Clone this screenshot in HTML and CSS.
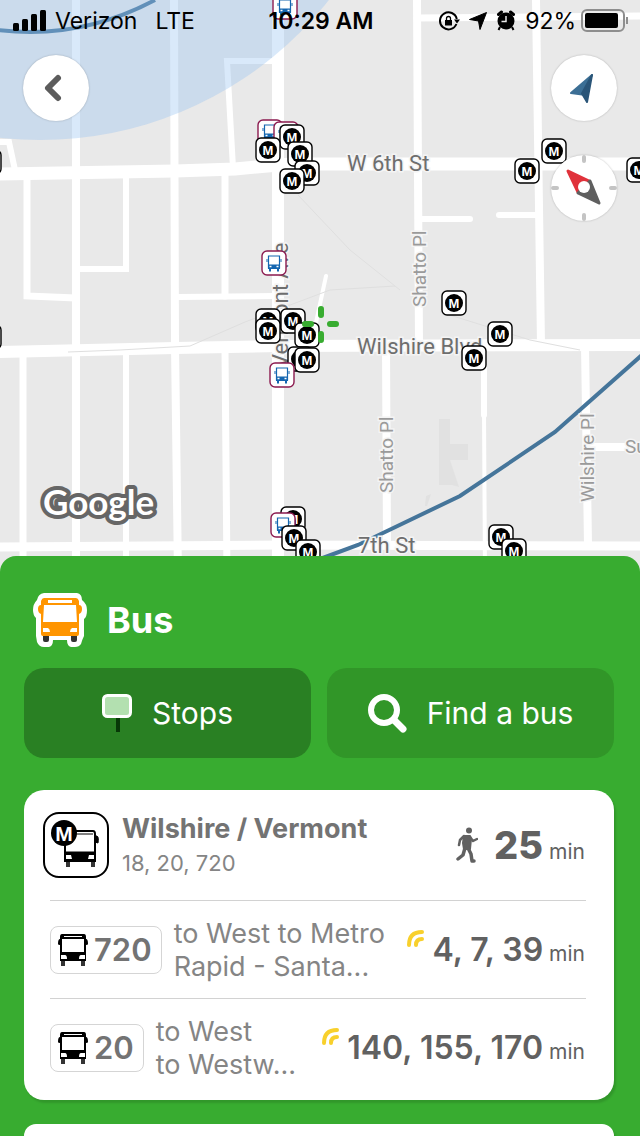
FILE: index.html
```html
<!DOCTYPE html>
<html lang="en">

<head>
  <meta charset="UTF-8">
  <title>Bus</title>
  <meta name="viewport" content="width=device-width,initial-scale=1">
  <link rel="stylesheet" href="styles.css">
</head>

<body>
  <section class="map">
    <svg class="map-canvas" viewBox="0 0 640 576" preserveAspectRatio="xMidYMin slice">
      <defs>
        <g id="metro">
          <rect x="-12" y="-12" width="24" height="24" rx="5" fill="#fff" stroke="#000" stroke-width="1.4" />
          <circle r="9" />
          <text class="pin-m" y="5" text-anchor="middle">M</text>
        </g>
        <g id="bus-pin">
          <rect x="-12" y="-12" width="24" height="24" rx="5" fill="#fff" stroke="#8b1a4f" stroke-width="1.4" />
          <path d="M-5.500-7H5.500V5H-5.500z" fill="#fff" stroke="#1466b0" stroke-width="1.2" />
          <path d="M-6 1.500H6V6H-6zM-5 6h2v2.500H-5zM3 6H5v2.500H3zM-7.500-4h1v3H-7.500zM6.500-4H7.500v3H6.500z" fill="#1466b0" />
          <path d="M-4.500 3.500h2M2.500 3.500h2" stroke="#fff" stroke-width="1.500" />
        </g>
      </defs>

      <rect width="640" height="576" fill="#e9e9e9" />

      <!-- buildings -->
      <path d="M439 419h11v25h18v16h-18l9 27-7-2-13 0zM426 496l5-2-4 12h-2z" fill="#e1e1e1" />

      <!-- roads -->
      <g class="roads">
        <path stroke-width="13" d="M0 174L175 171 235 169 290 164H640" />
        <path stroke-width="12" d="M0 352L175 348 280 346 640 345" />
        <path stroke-width="9" d="M0 547L280 545 640 546" />
        <path stroke-width="12" d="M278 0V576" />
        <path stroke-width="8" d="M76 0V576M174 0L175 345 178 576M417 0L419 345M536 0L541 345M386 345L387 545M585 345L588 545M590 447H640" />
        <path stroke-width="7" d="M27 174V296L76 298M23 350V576M417 18L640 16M225 170V296M225 350L227 576" />
        <path stroke-width="6" d="M0 142H9L15 170M275 61H227L233 168M126 174V269H76M126 350V576M178 297L275 296M420 219H470M499 215H536M484 350V415" />
        <path stroke-width="4" d="M484 410L485 576M326 276L314 332" />
      </g>
      <path d="M68 352L120 350 190 346 245 322 330 290 395 286M298 195L350 250 400 290M440 312L530 340 580 350" fill="none" stroke="#dfdfdf" />

      <!-- transit line and walk radius -->
      <path class="line" d="M320 559L358 545 460 496 555 432 642 355M-2 30Q80 40 155 0" />
      <circle cx="40" cy="-228" r="368" fill="#95c3f2" fill-opacity=".36" />

      <g class="street">
        <text x="347" y="171">W 6th St</text>
        <text x="357" y="354">Wilshire Blvd</text>
        <text x="358" y="553">7th St</text>
        <text transform="translate(288 368) rotate(-90)">Vermont Ave</text>
      </g>
      <g class="street minor">
        <text transform="translate(426 307) rotate(-90)">Shatto Pl</text>
        <text transform="translate(393 493) rotate(-90)">Shatto Pl</text>
        <text transform="translate(594 502) rotate(-90)">Wilshire Pl</text>
        <text x="625" y="453">Sunset Pl</text>
      </g>

      <use href="#bus-pin" x="285" y="7" />
      <use href="#bus-pin" x="270" y="132" />
      <use href="#bus-pin" x="286" y="134" />
      <use href="#metro" x="292" y="137" />
      <use href="#metro" x="268" y="150" />
      <use href="#metro" x="300" y="154" />
      <use href="#metro" x="307" y="173" />
      <use href="#metro" x="292" y="181" />
      <use href="#metro" x="-11" y="162" />
      <use href="#metro" x="-11" y="337" />
      <use href="#metro" x="554" y="151" />
      <use href="#metro" x="527" y="171" />
      <use href="#metro" x="639" y="170" />
      <use href="#bus-pin" x="274" y="263" />
      <use href="#metro" x="268" y="321" />
      <use href="#metro" x="293" y="321" />
      <use href="#metro" x="268" y="331" />
      <use href="#metro" x="307" y="335" />
      <use href="#metro" x="300" y="359" />
      <use href="#metro" x="307" y="360" />
      <use href="#bus-pin" x="282" y="375" />
      <use href="#metro" x="454" y="303" />
      <use href="#metro" x="500" y="334" />
      <use href="#metro" x="474" y="358" />
      <use href="#metro" x="293" y="519" />
      <use href="#bus-pin" x="283" y="525" />
      <use href="#metro" x="294" y="538" />
      <use href="#metro" x="308" y="552" />
      <use href="#metro" x="501" y="537" />
      <use href="#metro" x="514" y="551" />

      <path d="M321 309v6M321 334v6M305 324h6M330 324h6" stroke="#38ac30" stroke-width="6" stroke-linecap="round" />
      <text class="google" x="43" y="515">Google</text>
    </svg>

    <header class="status">
      <div class="status-side">
        <svg class="bars" viewBox="0 0 33 21">
          <rect y="13" width="6" height="8" rx="1.500" />
          <rect x="9" y="9" width="6" height="12" rx="1.500" />
          <rect x="18" y="4" width="6" height="17" rx="1.500" />
          <rect x="27" width="6" height="21" rx="1.500" />
        </svg>
        <span class="carrier">Verizon</span>
        <span>LTE</span>
      </div>
      <strong>10:29 AM</strong>
      <div class="status-side right">
        <svg class="lock" viewBox="0 0 21 20" fill="none" stroke="#000" stroke-width="2">
          <path d="M17.400 13A8.500 8.500 0 1 1 17.800 8" />
          <path d="M15 8.500h6L18 12.500z" fill="#000" stroke="none" />
          <rect x="6" y="9" width="7" height="5.500" fill="#000" stroke="none" />
          <path d="M7.500 9V7.500a2 2 0 0 1 4 0V9" stroke-width="1.300" />
        </svg>
        <svg class="arrow" viewBox="0 0 18 18">
          <path d="M17.500 .5L11 17.500 9.500 9 .5 7.500z" stroke="#000" stroke-linejoin="round" />
        </svg>
        <svg class="alarm" viewBox="0 0 20 21">
          <circle cx="10" cy="11" r="8.500" />
          <path d="M2.500 4.500l3-2.500M14.500 2l3 2.500" stroke="#000" stroke-width="3" stroke-linecap="round" />
          <path d="M4 17l-1.500 3M16 17l1.500 3" stroke="#000" stroke-width="2" />
          <path d="M10 6v5.500H5.500" fill="none" stroke="#e9e9e9" stroke-width="1.500" />
        </svg>
        <span>92%</span>
        <svg class="battery" viewBox="0 0 48 24">
          <rect x="1" y="1" width="42" height="21" rx="5" fill="none" stroke="#8e8e8e" stroke-width="2" />
          <rect x="4" y="4" width="33" height="15" rx="2" />
          <path d="M46 8v7" stroke="#8e8e8e" stroke-width="2" />
        </svg>
      </div>
    </header>

    <div class="controls">
      <button class="round" aria-label="Back">
        <svg viewBox="0 0 66 66"><path d="M35 23L25 33 35 43" fill="none" stroke="#5c5c5c" stroke-width="6" stroke-linecap="round" stroke-linejoin="round" /></svg>
      </button>
      <div class="controls-right">
        <button class="round" aria-label="My location">
          <svg viewBox="0 0 66 66">
            <path d="M41 20L20 38 31 39.500z" fill="#3c6f95" stroke="#3c6f95" stroke-width="2" stroke-linejoin="round" />
            <path d="M41 20L31 38.500 36 47z" fill="#2a5578" stroke="#2a5578" stroke-width="2" stroke-linejoin="round" />
          </svg>
        </button>
        <button class="round" aria-label="Compass">
          <svg viewBox="0 0 66 66">
            <path d="M33 2v4M33 60v4M2 33h4M60 33h4" stroke="#c4c4c4" stroke-width="4" stroke-linecap="round" />
            <path d="M17 16L38 26 27 37z" fill="#e0323b" stroke="#e0323b" stroke-width="3" stroke-linejoin="round" />
            <path d="M48 48L39 26 27 38z" fill="#5f5f5f" stroke="#5f5f5f" stroke-width="3" stroke-linejoin="round" />
            <circle cx="33" cy="32" r="6" fill="#fff" />
          </svg>
        </button>
      </div>
    </div>
  </section>

  <main class="sheet">
    <div class="title">
      <svg viewBox="0 0 54 54">
        <path d="M11 0H44Q49 1 49 7Q54 11 54 17Q54 24 51 26V43Q49 47 48 51Q46 54 42 54H38Q34 53 34 47H20Q20 53 16 54H11Q6 54 4 49L3 43V25Q0 22 0 17Q0 11 4 7Q5 1 11 0z" fill="#fff" />
        <path d="M10 42h6v5q0 2-2 2h-2q-2 0-2-2zM38 42h6v5q0 2-2 2h-2q-2 0-2-2z" fill="#333" />
        <path d="M11 5H43Q45 5 46 8V12Q49 12 49 16Q49 20 46 21V41Q46 43 44 43H10Q8 43 8 41V21Q5 20 5 16Q5 12 8 12V8Q9 5 11 5z" fill="#ff9500" />
        <path d="M15 7h24v3H15zM11 12h32l1 17H10zM10 35h5q2 1 2 4h-7zM44 35h-5q-2 1-2 4h7z" fill="#fff" />
      </svg>
      <h1>Bus</h1>
    </div>

    <div class="tabs">
      <button class="tab active">
        <svg class="stop-icon" viewBox="0 0 30 38">
          <path d="M16 20v18" stroke="#073807" stroke-width="4" />
          <rect x="1.500" y="1.500" width="27" height="21" rx="4" fill="#b3e0b0" stroke="#fff" stroke-width="3" />
        </svg>
        Stops
      </button>
      <button class="tab">
        <svg class="search-icon" viewBox="0 0 39 39" fill="none" stroke="#fff" stroke-width="6" stroke-linecap="round">
          <circle cx="16" cy="16" r="13" />
          <path d="M26 26L35 35" stroke-width="7" />
        </svg>
        Find a bus
      </button>
    </div>

    <article class="card">
      <div class="stop">
        <svg class="stop-logo" viewBox="0 0 66 66">
          <rect x="1" y="1" width="64" height="64" rx="15" fill="#fff" stroke="#000" stroke-width="2" />
          <path d="M23 49h4v6h-4zM48 49h4v6h-4z" fill="#333" />
          <path d="M22 22V49H52V22Q52 19 50 19H23" fill="#fff" stroke="#000" stroke-width="2" />
          <path d="M25 22h25M22 40h30v9H22zM52 24h2q2 1 1 7l-3-1z" stroke="#000" />
          <path d="M23 43h5l1 4h-6zM51 43h-5l-1 4h6z" fill="#fff" />
          <circle cx="21" cy="21" r="13" />
          <text class="logo-m" x="21" y="29" text-anchor="middle">M</text>
        </svg>
        <div class="stop-name">
          <h2>Wilshire / Vermont</h2>
          <p>18, 20, 720</p>
        </div>
        <div class="walk">
          <svg viewBox="0 0 22 36" fill="#616161" stroke="#616161" stroke-linecap="round" stroke-linejoin="round">
            <circle cx="13" cy="3.500" r="3" stroke="none" />
            <path d="M8 9h6l1 3-1 10H8l-1-6z" stroke-width="2" />
            <path d="M8 9L4 13 3 18M14 10l3 4 4-2" fill="none" stroke-width="2.500" />
            <path d="M9 21L7 28 2 32M12 21l3 6 1 7h2" fill="none" stroke-width="3.500" />
          </svg>
          <b>25</b><span>min</span>
        </div>
      </div>

      <div class="route">
        <div class="line-badge">
          <svg viewBox="0 0 30 32">
            <path d="M3 27h4v5H3zM23 27h4v5h-4z" fill="#333" />
            <path d="M4 0h22q2 0 2 3v2q2 0 2 5 0 1-2 1v16H2V11Q0 11 0 10 0 5 2 5V3q0-3 2-3z" />
            <path d="M6 2h18v1H6zM4 5h22v13H4zM3 21h4q2 0 2 4H3zM27 21h-4q-2 0-2 4h6z" fill="#fff" />
          </svg>
          <b>720</b>
        </div>
        <p>to West to Metro<br>Rapid - Santa...</p>
        <div class="times">
          <svg viewBox="0 0 17 17"><path d="M2 15Q2 2 15 2M9 15Q9 9 15 9" fill="none" stroke="#f8d02c" stroke-width="4" stroke-linecap="round" /></svg>
          <b>4, 7, 39</b><span>min</span>
        </div>
      </div>

      <div class="route">
        <div class="line-badge">
          <svg viewBox="0 0 30 32">
            <path d="M3 27h4v5H3zM23 27h4v5h-4z" fill="#333" />
            <path d="M4 0h22q2 0 2 3v2q2 0 2 5 0 1-2 1v16H2V11Q0 11 0 10 0 5 2 5V3q0-3 2-3z" />
            <path d="M6 2h18v1H6zM4 5h22v13H4zM3 21h4q2 0 2 4H3zM27 21h-4q-2 0-2 4h6z" fill="#fff" />
          </svg>
          <b>20</b>
        </div>
        <p>to West<br>to Westw...</p>
        <div class="times">
          <svg viewBox="0 0 17 17"><path d="M2 15Q2 2 15 2M9 15Q9 9 15 9" fill="none" stroke="#f8d02c" stroke-width="4" stroke-linecap="round" /></svg>
          <b>140, 155, 170</b><span>min</span>
        </div>
      </div>
    </article>

    <article class="card next"></article>
  </main>
</body>

</html>
```
FILE: styles.css
```css
* {
  box-sizing: border-box;
  margin: 0;
  padding: 0;
}

:root {
  --green: #38ac30;
  --text: #616161;
  --muted: #858585;
  --ui: Inter, "Liberation Sans", sans-serif;
}

body {
  height: 100vh;
  display: flex;
  flex-direction: column;
  overflow: hidden;
  font-family: var(--ui);
  background: var(--green);
}

button {
  border: none;
  cursor: pointer;
}

svg {
  flex: none;
}

/* map */
.map {
  position: relative;
  flex: none;
  height: 576px;
  overflow: hidden;
}

.map-canvas {
  position: absolute;
  inset: 0;
  width: 100%;
  height: 100%;
}

.roads {
  fill: none;
  stroke: #fff;
  stroke-linecap: round;
}

.line {
  fill: none;
  stroke: #45759a;
  stroke-width: 4px;
}

.street {
  font: 400 22px Roboto, sans-serif;
  fill: #6e6e6e;
  stroke: #f4f4f4;
  stroke-width: 3px;
  paint-order: stroke;
}

.minor {
  font-size: 19px;
  fill: #9a9a9a;
}

.pin-m {
  font: 700 13px "Liberation Sans", sans-serif;
  fill: #fff;
}

.google {
  font: 700 35px Lato, sans-serif;
  fill: #fff;
  stroke: #666;
  stroke-width: 8px;
  stroke-linejoin: round;
  paint-order: stroke;
}

.status {
  position: relative;
  height: 41px;
  padding: 0 11px 0 13px;
  display: grid;
  grid-template-columns: 1fr auto 1fr;
  align-items: center;
  font-size: 23px;
}

.status strong {
  font-weight: 600;
}

.status-side {
  display: flex;
  align-items: center;
  gap: 9px;
}

.status-side.right {
  justify-content: flex-end;
}

.carrier {
  margin-right: 9px;
}

.bars {
  width: 33px;
  height: 21px;
}

.lock {
  width: 21px;
  height: 20px;
}

.arrow {
  width: 18px;
  height: 18px;
}

.alarm {
  width: 20px;
  height: 21px;
}

.battery {
  width: 48px;
  height: 24px;
  margin-left: -4px;
}

.controls {
  position: relative;
  display: flex;
  justify-content: space-between;
  align-items: flex-start;
  padding: 14px 23px;
}

.controls-right {
  display: flex;
  flex-direction: column;
  gap: 34px;
}

.round {
  width: 66px;
  height: 66px;
  border-radius: 50%;
  background: #fff;
  box-shadow: 0 0 2px rgba(0, 0, 0, .25);
}

.round svg {
  display: block;
  width: 66px;
  height: 66px;
}

/* bottom sheet */
.sheet {
  position: relative;
  flex: 1;
  display: flex;
  flex-direction: column;
  margin-top: -20px;
  padding: 37px 26px 0 24px;
  border-radius: 16px 16px 0 0;
  background: var(--green);
}

.title {
  display: flex;
  align-items: center;
  gap: 20px;
  padding-left: 9px;
  color: #fff;
}

.title svg {
  width: 54px;
  height: 54px;
}

h1 {
  font-size: 36px;
  font-weight: 700;
  line-height: 54px;
}

.tabs {
  display: flex;
  gap: 16px;
  margin: 21px 0 32px;
}

.tab {
  flex: 1;
  height: 90px;
  display: flex;
  align-items: center;
  justify-content: center;
  gap: 20px;
  border-radius: 20px;
  background: #319628;
  color: #fff;
  font: 400 30px var(--ui);
}

.tab.active {
  background: #298023;
}

.stop-icon {
  width: 30px;
  height: 38px;
}

.search-icon {
  width: 39px;
  height: 39px;
}

.card {
  flex: none;
  padding: 0 28px 4px 26px;
  border-radius: 20px;
  background: #fff;
  box-shadow: 2px 3px 2px rgba(0, 0, 0, .12);
  color: var(--text);
}

.next {
  flex: 1;
  margin-top: 24px;
  border-radius: 20px 20px 0 0;
}

.stop {
  display: flex;
  align-items: center;
  height: 110px;
}

.stop-logo {
  width: 66px;
  height: 66px;
  margin-left: -7px;
}

.logo-m {
  font: 700 21px "Liberation Sans", sans-serif;
  fill: #fff;
}

.stop-name {
  flex: 1;
  padding-left: 13px;
}

h2 {
  font-size: 27px;
  font-weight: 700;
  line-height: 36px;
  color: #737373;
}

.stop-name p {
  font-size: 22px;
  line-height: 32px;
  color: var(--muted);
}

.walk,
.times {
  display: flex;
  align-items: baseline;
  padding-right: 1px;
}

.walk svg {
  align-self: center;
  width: 22px;
  height: 36px;
  margin-right: 16px;
}

.walk b {
  font-size: 38px;
  font-weight: 800;
}

.walk span,
.times span {
  margin-left: 6px;
  font-size: 21px;
}

.route {
  display: flex;
  align-items: center;
  height: 98px;
  border-top: 1px solid #d2d2d2;
}

.route p {
  flex: 1;
  padding-left: 12px;
  font-size: 27px;
  line-height: 33px;
  color: var(--muted);
  white-space: nowrap;
}

.line-badge {
  display: flex;
  align-items: center;
  gap: 6px;
  height: 48px;
  padding: 0 9px 0 7px;
  border: 1px solid #d5d5d5;
  border-radius: 8px;
  color: #737373;
}

.line-badge svg {
  width: 30px;
  height: 32px;
}

.line-badge b,
.times b {
  font-size: 31px;
  font-weight: 600;
}

.times b {
  font-size: 32px;
}

.times svg {
  align-self: flex-start;
  width: 17px;
  height: 17px;
  margin-right: 8px;
}
```
